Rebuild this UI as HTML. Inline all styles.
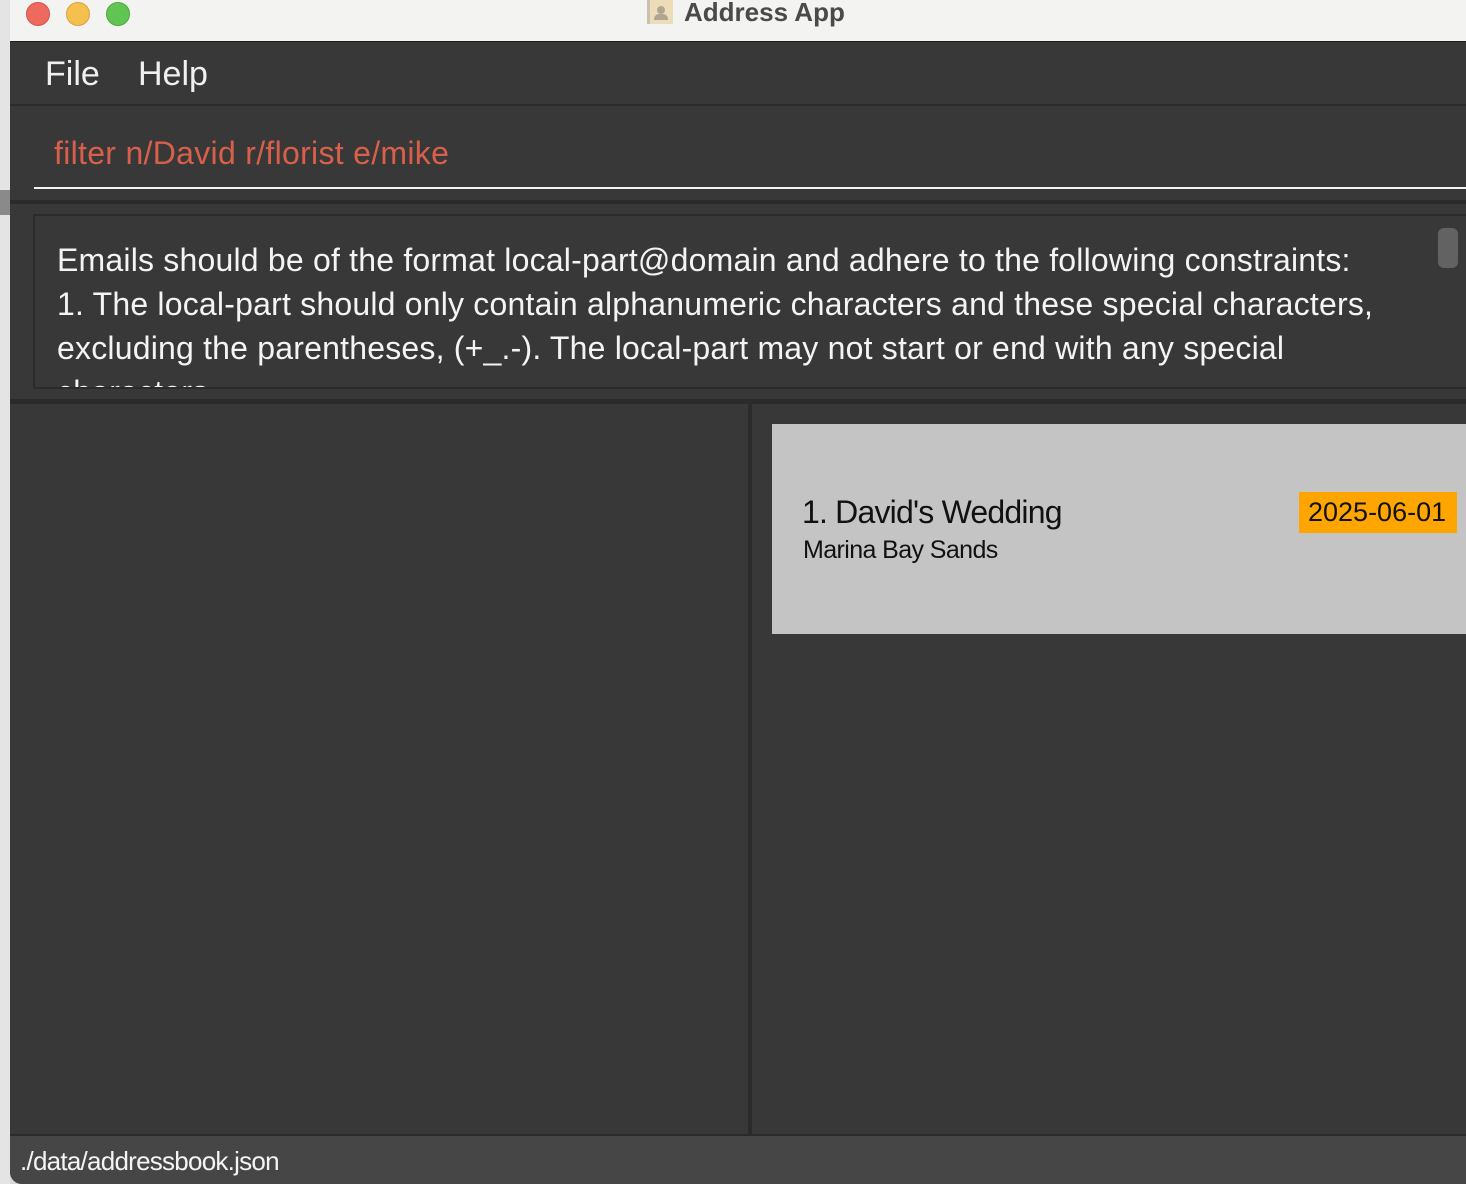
<!DOCTYPE html>
<html><head><meta charset="utf-8"><style>
*{margin:0;padding:0;box-sizing:border-box}
body{width:1466px;height:1184px;overflow:hidden;background:#d8d8d8;font-family:"Liberation Sans",sans-serif;position:relative}
.abs{position:absolute}
</style></head><body>
<div class="abs" style="left:0;top:0;width:10px;height:1184px;background:#e4e4e4"></div>
<div class="abs" style="left:0;top:190px;width:10px;height:25px;background:#8a8a8a"></div>
<div class="abs" style="left:10px;top:0;width:1456px;height:1184px;background:#383838;border-bottom-left-radius:12px;overflow:hidden">
  <div class="abs" style="left:0;top:0;width:1456px;height:42px;background:#f3f3f1;border-bottom:1px solid #1e1e1e"></div>
  <div class="abs" style="left:16px;top:2px;width:24px;height:24px;border-radius:50%;background:#ee6a5f;border:1px solid #d2544a"></div>
  <div class="abs" style="left:56px;top:2px;width:24px;height:24px;border-radius:50%;background:#f5c04f;border:1px solid #d7a23b"></div>
  <div class="abs" style="left:96px;top:2px;width:24px;height:24px;border-radius:50%;background:#61c554;border:1px solid #4ca73f"></div>
  <div class="abs" style="left:637px;top:0;width:26px;height:24px;background:#ecdcb8;border-left:3px solid #c8c0b0"><div style="position:absolute;left:7px;top:6px;width:8px;height:8px;border-radius:50%;background:#b0a590"></div><div style="position:absolute;left:4px;top:14px;width:14px;height:6px;background:#b0a590;border-radius:5px 5px 0 0"></div></div>
  <div class="abs" style="left:674px;top:-3px;font-size:26px;font-weight:bold;color:#4a4a4a">Address App</div>
  <div class="abs" style="left:0;top:43px;width:1456px;height:63px;background:#383838;border-bottom:2px solid #2b2b2b"></div>
  <div class="abs" style="left:35px;top:55px;font-size:34px;color:#f0f0f0">File</div>
  <div class="abs" style="left:128px;top:55px;font-size:34px;color:#f0f0f0">Help</div>
  <div class="abs" style="left:44px;top:135px;font-size:32px;color:#d8604a;letter-spacing:0.3px">filter n/David r/florist e/mike</div>
  <div class="abs" style="left:24px;top:187px;width:1432px;height:2px;background:#f4f4f4"></div>
  <div class="abs" style="left:0;top:200px;width:1456px;height:4px;background:#2b2b2b"></div>
  <div class="abs" style="left:23px;top:214px;width:1433px;height:175px;border:2px solid #2b2b2b;border-right:none;background:#383838;overflow:hidden">
    <div style="position:absolute;left:22px;top:22px;font-size:32px;line-height:44px;color:#f4f4f4;letter-spacing:0.2px;width:1390px;white-space:nowrap">Emails should be of the format local-part@domain and adhere to the following constraints:<br>1. The local-part should only contain alphanumeric characters and these special characters,<br>excluding the parentheses, (+_.-). The local-part may not start or end with any special<br>characters.</div>
    <div style="position:absolute;left:1403px;top:12px;width:20px;height:40px;border-radius:6px;background:#626262"></div>
  </div>
  <div class="abs" style="left:0;top:399px;width:1456px;height:5px;background:#2b2b2b"></div>
  <div class="abs" style="left:738px;top:404px;width:4px;height:730px;background:#2b2b2b"></div>
  <div class="abs" style="left:762px;top:424px;width:694px;height:210px;background:#c4c4c4"></div>
  <div class="abs" style="left:792px;top:494px;font-size:32px;color:#111;letter-spacing:-0.8px">1. David's Wedding</div>
  <div class="abs" style="left:793px;top:536px;font-size:25px;color:#111;letter-spacing:-0.6px">Marina Bay Sands</div>
  <div class="abs" style="left:1289px;top:492px;width:158px;height:41px;background:#ffa500;font-size:27px;color:#111;padding:5px 0 0 9px">2025-06-01</div>
  <div class="abs" style="left:0;top:1134px;width:1456px;height:2px;background:#2b2b2b"></div>
  <div class="abs" style="left:0;top:1136px;width:1456px;height:48px;background:#464646"></div>
  <div class="abs" style="left:10px;top:1146px;font-size:26px;color:#f4f4f4;letter-spacing:-0.75px">./data/addressbook.json</div>
</div>
</body></html>
